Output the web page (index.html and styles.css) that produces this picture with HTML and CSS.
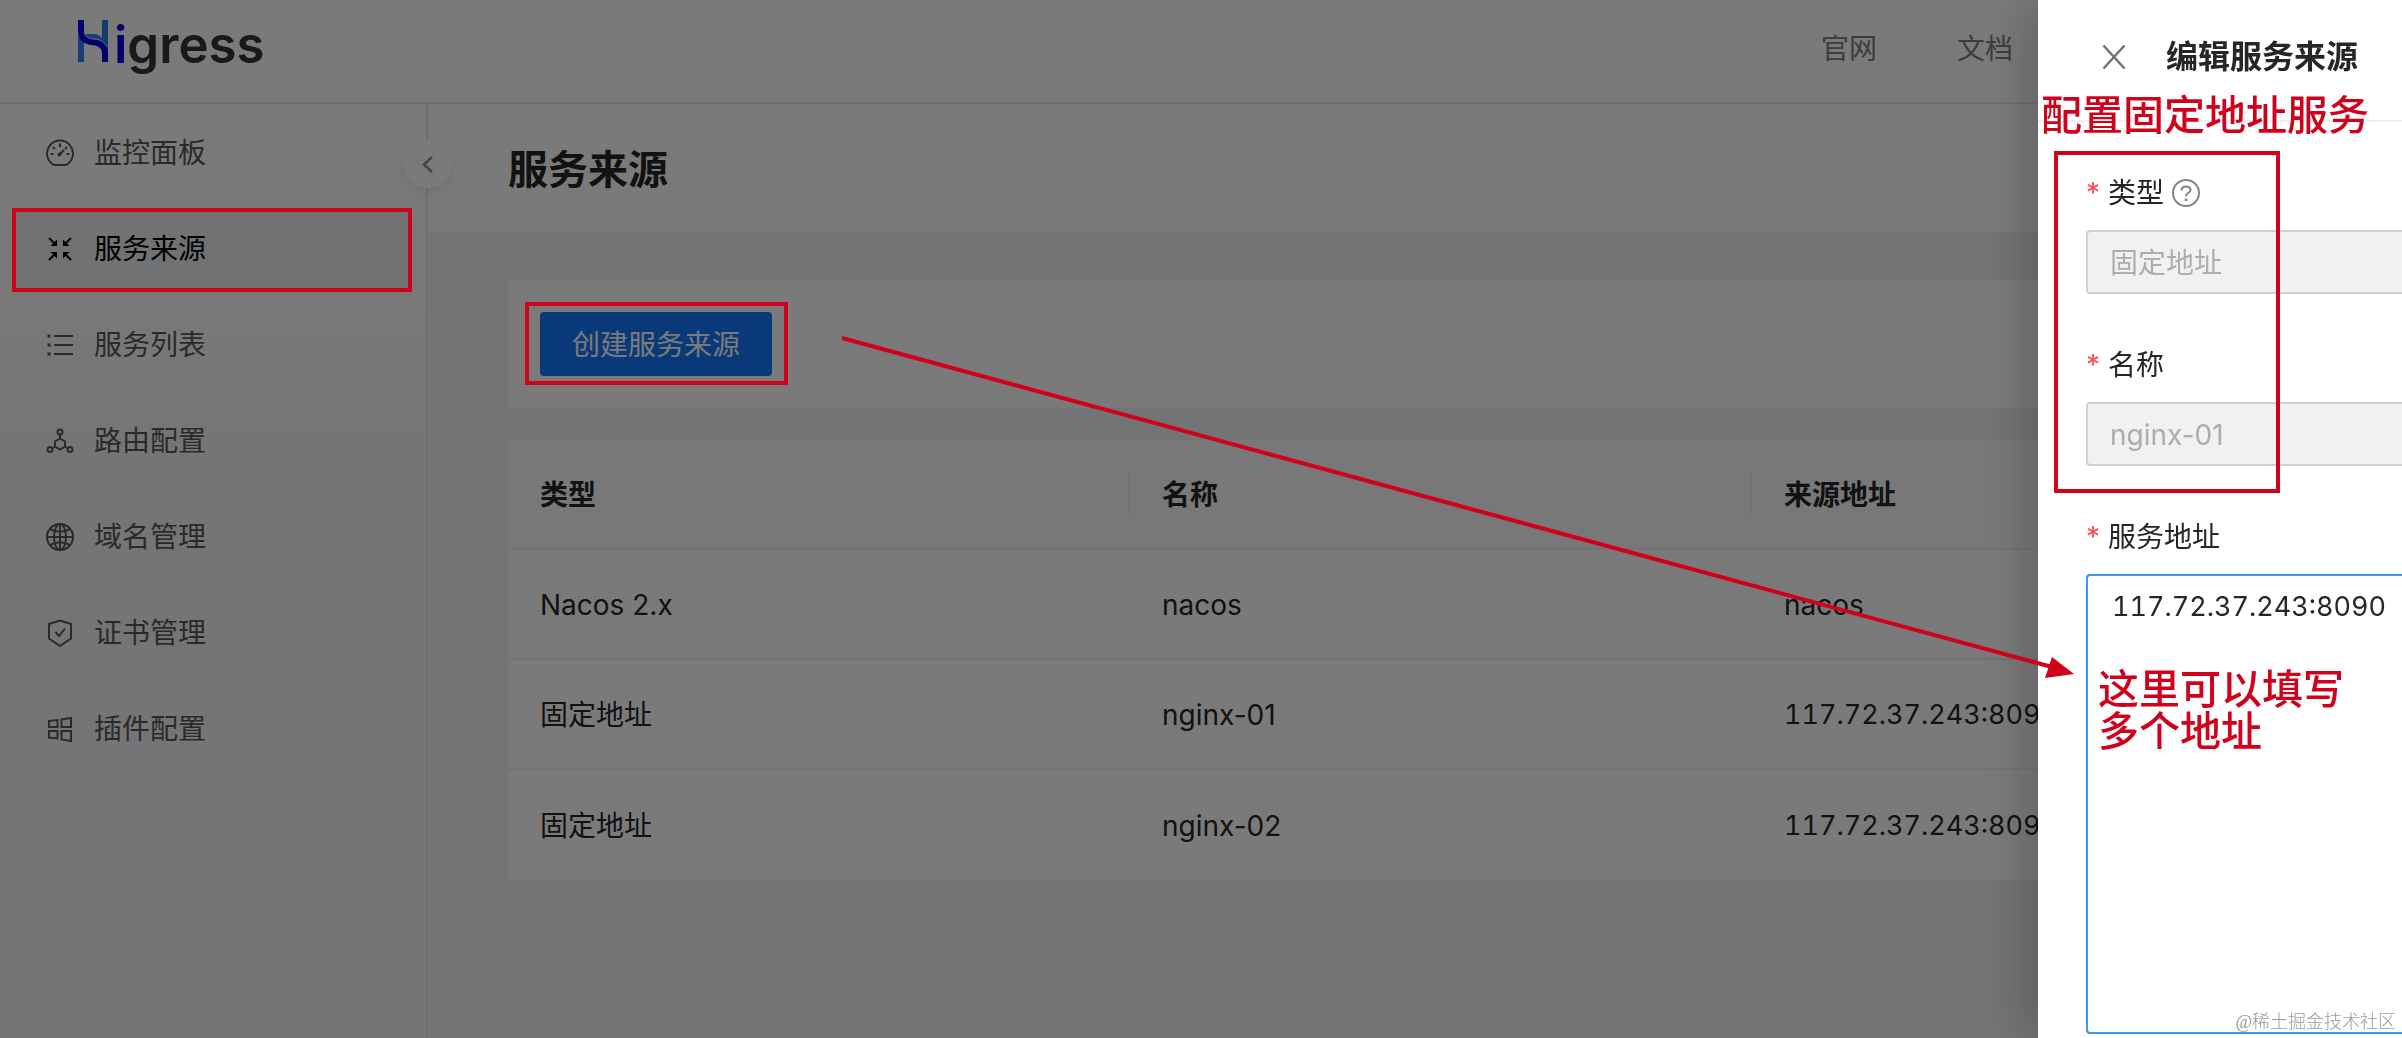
FILE: index.html
```html
<!DOCTYPE html>
<html lang="zh-CN">
<head>
<meta charset="utf-8">
<title>Higress</title>
<link rel="stylesheet" href="styles.css">
</head>
<body>
<div class="app">
  <header class="topbar">
    <a class="logo" href="#">
      <svg class="logo-mark" width="32" height="44" viewBox="0 0 32 44" aria-hidden="true">
        <path d="M1 16L7 22V43H1z" fill="#2a83f5"/>
        <path d="M25 1H31V32L25 24z" fill="#2a7ce0"/>
        <path d="M8 15H18Q24 16 27 22L22 25Q12 22 8 15z" fill="#2a83f5"/>
        <path d="M4 1V11Q4 22 15 23Q28 24 28 34V43" fill="none" stroke="#0a00e0" stroke-width="6"/>
        <path d="M7 13Q9 20 17 20Q26 20 30 28" fill="none" stroke="#d8e4ff" stroke-width="1"/>
      </svg>
      <span class="logo-text"><span class="logo-i">i</span>gress</span>
    </a>
    <nav class="links">
      <a href="#">官网</a>
      <a href="#">文档</a>
    </nav>
  </header>

  <div class="columns">
    <aside class="sidebar">
      <button class="collapse" type="button" aria-label="收起">
        <svg width="28" height="28" viewBox="0 0 28 28"><path d="M18 7L10 14.500L18 22" fill="none" stroke="currentColor" stroke-width="2.500"/></svg>
      </button>
      <nav class="menu">
        <a class="item" href="#">
          <svg class="icon" viewBox="0 0 28 28"><path d="M7 25.500A13 13 0 1 1 21 25.500Q20.500 26 19.500 26H8.500Q7.500 26 7 25.500z"/><path d="M14 4.500V8M4.500 15H7.500M20.500 15H23.500M7 8L9 10M19 10L21 8M13.500 15.500L18 11"/><circle cx="13.500" cy="15.500" r="1"/></svg>
          监控面板</a>
        <a class="item active" href="#">
          <svg class="icon" viewBox="0 0 28 28"><path d="M3 3L9 9M25 3L19 9M3 25L9 19M25 25L19 19"/><path fill="currentColor" stroke="none" d="M11 4.500V11H4.500zM17 4.500V11H23.500zM11 23.500V17H4.500zM17 23.500V17H23.500z"/></svg>
          服务来源</a>
        <a class="item" href="#">
          <svg class="icon" viewBox="0 0 28 28"><path d="M8 5H27M8 14H27M8 23H27"/><path d="M1.500 5H4.500M1.500 14H4.500M1.500 23H4.500" stroke-width="3"/></svg>
          服务列表</a>
        <a class="item" href="#">
          <svg class="icon" viewBox="0 0 28 28"><circle cx="14" cy="5" r="2.500"/><circle cx="4" cy="22.500" r="2.500"/><circle cx="24" cy="22.500" r="2.500"/><path d="M14 7.500V12M14 11.500L19 14.500V19.500L14 22.500L9 19.500V14.500zM9 19.500L6 21.500M19 19.500L22 21.500"/></svg>
          路由配置</a>
        <a class="item" href="#">
          <svg class="icon" viewBox="0 0 28 28"><circle cx="14" cy="14" r="13"/><ellipse cx="14" cy="14" rx="6" ry="13"/><path d="M14 1V27M1 14H27M4 6Q14 11.500 24 6M4 22Q14 16.500 24 22"/></svg>
          域名管理</a>
        <a class="item" href="#">
          <svg class="icon" viewBox="0 0 28 28"><path d="M14 1.500L25 5V19.500L14 27L3 19.500V5z"/><path d="M9.500 13L13 17L19 9.500"/></svg>
          证书管理</a>
        <a class="item" href="#">
          <svg class="icon" viewBox="0 0 28 28"><path d="M3 6L11.500 5V12H3zM15.500 4.500L25 3V12H15.500zM3 16H11.500V23.500L3 22.500zM15.500 16H25V26L15.500 24.500z"/></svg>
          插件配置</a>
      </nav>
    </aside>

    <main class="main">
      <div class="page-head"><h1>服务来源</h1></div>
      <div class="content">
        <section class="card toolbar">
          <button class="primary" type="button">创建服务来源</button>
        </section>
        <table class="card sources">
          <thead>
            <tr><th scope="col">类型</th><th scope="col">名称</th><th scope="col">来源地址</th></tr>
          </thead>
          <tbody>
            <tr><td>Nacos 2.x</td><td>nacos</td><td>nacos</td></tr>
            <tr><td>固定地址</td><td>nginx-01</td><td class="address">117.72.37.243:8090</td></tr>
            <tr><td>固定地址</td><td>nginx-02</td><td class="address">117.72.37.243:8090</td></tr>
          </tbody>
        </table>
      </div>
    </main>
  </div>
</div>

<div class="mask"></div>

<div class="drawer" role="dialog" aria-labelledby="drawer-title">
  <div class="drawer-head">
    <button class="close" type="button" aria-label="关闭">
      <svg width="28" height="28" viewBox="0 0 28 28"><path d="M3.500 2.500L24.500 25.500M24.500 2.500L3.500 25.500" fill="none" stroke="currentColor" stroke-width="2.500"/></svg>
    </button>
    <h2 id="drawer-title">编辑服务来源</h2>
  </div>
  <form class="form">
    <div class="field">
      <div class="label"><span class="star">*</span><label for="type">类型</label>
        <svg class="help" width="28" height="28" viewBox="0 0 28 28" fill="none" stroke="currentColor" stroke-width="2"><circle cx="14" cy="14" r="13"/><path d="M9.500 11.500Q9.500 7.500 14 7.500T18.500 11.200Q18.500 13 16 14.200Q14 15.200 14 17.500"/><path d="M14 19.500V22" stroke-width="2.500"/></svg>
      </div>
      <select id="type" class="control" disabled><option>固定地址</option></select>
    </div>
    <div class="field">
      <div class="label"><span class="star">*</span><label for="name">名称</label></div>
      <input id="name" class="control" type="text" value="nginx-01" disabled>
    </div>
    <div class="field">
      <div class="label"><span class="star">*</span><label for="address">服务地址</label></div>
      <textarea id="address" class="control area address" spellcheck="false">117.72.37.243:8090</textarea>
    </div>
  </form>
  <p class="note note-title">配置固定地址服务</p>
  <p class="note note-address">这里可以填写<br>多个地址</p>
  <div class="frame frame-fields"></div>
  <p class="watermark">@稀土掘金技术社区</p>
</div>

<div class="marks">
  <div class="frame frame-menu"></div>
  <div class="frame frame-button"></div>
  <svg class="arrow" width="1234" height="350" viewBox="0 0 1234 350" aria-hidden="true">
    <path d="M2 8L1212 337" stroke="#d0021b" stroke-width="4" fill="none"/>
    <path d="M1212 327L1234 344L1205 348z" fill="#d0021b"/>
  </svg>
</div>
</body>
</html>
```

FILE: styles.css
```css
* { box-sizing: border-box; }

body {
  margin: 0;
  font: 28px/44px Inter, "Noto Sans CJK SC", sans-serif;
  color: #262626;
  background: #f0f2f5;
  overflow: hidden;
}

h1, h2, p { margin: 0; }
a { color: inherit; text-decoration: none; }
button { font: inherit; border: 0; padding: 0; }

.app {
  min-height: 100vh;
  display: flex;
  flex-direction: column;
}

.topbar {
  height: 104px;
  display: flex;
  justify-content: space-between;
  align-items: flex-start;
  padding: 0 389px 0 77px;
  background: #fff;
  border-bottom: 2px solid #e8e8e8;
}

.logo {
  display: flex;
  align-items: flex-start;
  padding-top: 19px;
}

.logo-text {
  font-size: 51px;
  font-weight: 600;
  line-height: 52px;
  color: #30353c;
  padding-left: 5px;
}

.logo-i { color: #0a00e0; }

.links {
  display: flex;
  gap: 80px;
  padding-top: 27px;
  color: #808080;
}

.columns {
  flex: 1;
  display: flex;
}

.sidebar {
  position: relative;
  flex: none;
  width: 428px;
  padding: 8px 16px 0;
  background: linear-gradient(#fff, #fcfcfc 20%, #f3f4f6 38%);
  border-right: 2px solid #eaeaea;
}

.menu {
  display: flex;
  flex-direction: column;
  gap: 16px;
}

.item {
  height: 80px;
  display: flex;
  align-items: center;
  gap: 20px;
  padding: 2px 0 0 30px;
  color: #595959;
}

.item.active {
  color: #000;
  background: #edeef0;
}

.icon {
  width: 28px;
  height: 28px;
  fill: none;
  stroke: currentColor;
  stroke-width: 2;
}

.collapse {
  position: absolute;
  top: 36px;
  right: -26px;
  width: 48px;
  height: 48px;
  display: grid;
  place-items: center;
  border-radius: 50%;
  color: #8c8c8c;
  background: #fff;
  box-shadow: 0 4px 16px rgba(0, 0, 0, .08);
}

.main {
  flex: 1;
  min-width: 0;
}

.page-head {
  height: 128px;
  padding: 34px 80px 30px;
  background: #fff;
}

.page-head h1 {
  font-size: 40px;
  line-height: 64px;
  font-weight: 600;
}

.content {
  display: flex;
  flex-direction: column;
  gap: 32px;
  padding: 48px 80px;
}

.card { background: #fff; }

.toolbar { padding: 32px; }

.primary {
  display: block;
  height: 64px;
  padding: 2px 32px 0;
  border-radius: 4px;
  color: #fff;
  background: #1677ff;
}

.sources {
  width: 100%;
  border-collapse: separate;
  border-spacing: 0;
  table-layout: fixed;
}

.sources th, .sources td {
  height: 110px;
  padding: 2px 32px 0;
  text-align: left;
  border-bottom: 2px solid #f0f0f0;
}

.sources th:first-child, .sources th:nth-child(2) { width: 622px; }

.sources th {
  font-weight: 600;
  background: #fafafa linear-gradient(#f0f0f0, #f0f0f0) no-repeat right center / 2px 44px;
}

.sources th:last-child { background-image: none; }
.sources tbody tr:last-child td { border-bottom: 0; }

.mask {
  position: fixed;
  inset: 0;
  background: rgba(0, 0, 0, .52);
}

.drawer {
  position: fixed;
  top: 0;
  right: 0;
  bottom: 0;
  width: 364px;
  background: #fff;
  box-shadow: -12px 0 48px rgba(0, 0, 0, .2);
}

.drawer-head {
  height: 122px;
  display: flex;
  align-items: center;
  gap: 38px;
  padding: 0 0 6px 62px;
  border-bottom: 2px solid #f0f0f0;
}

.drawer-head h2 {
  font-size: 32px;
  font-weight: 600;
  white-space: nowrap;
}

.close {
  display: grid;
  width: 28px;
  height: 28px;
  color: #737373;
  background: none;
}

.form {
  display: flex;
  flex-direction: column;
  gap: 48px;
  padding: 48px 0 0 48px;
}

.field {
  display: flex;
  flex-direction: column;
  gap: 16px;
}

.label {
  height: 44px;
  padding-top: 2px;
  display: flex;
  align-items: center;
}

.star {
  width: 22px;
  color: #ff4d4f;
}

.help {
  margin-left: 8px;
  color: #858585;
}

.control {
  appearance: none;
  display: block;
  width: 100%;
  height: 64px;
  margin: 0;
  padding: 2px 22px 0;
  font: inherit;
  border: 2px solid #d0d0d0;
  border-right: 0;
  border-radius: 4px 0 0 4px;
  outline: 0;
}

.control:disabled {
  color: #adadad;
  background: #f1f1f1;
  opacity: 1;
}

.area {
  height: 460px;
  padding: 9px 0 9px 24px;
  resize: none;
  color: #262626;
  background: #fff;
  border-color: #4096e8;
}

.address {
  font-size: 27px;
  font-variant-numeric: tabular-nums;
}

.note {
  position: absolute;
  font-size: 41px;
  line-height: 42px;
  font-weight: 500;
  white-space: nowrap;
  color: #d0021b;
}

.note-title { left: 3px; top: 94px; }
.note-address { left: 60px; top: 668px; }

.watermark {
  position: absolute;
  right: 6px;
  bottom: 3px;
  font-family: "Liberation Serif", "Noto Sans CJK SC", serif;
  font-size: 18px;
  line-height: 26px;
  font-weight: 300;
  color: #999;
}

.frame {
  position: absolute;
  border: 4px solid #d0021b;
}

.frame-fields { left: 16px; top: 151px; width: 226px; height: 342px; }

.marks {
  position: absolute;
  top: 0;
  left: 0;
  pointer-events: none;
}

.frame-menu { left: 12px; top: 208px; width: 400px; height: 84px; }
.frame-button { left: 525px; top: 302px; width: 263px; height: 83px; }

.arrow {
  position: absolute;
  left: 840px;
  top: 330px;
}
```
